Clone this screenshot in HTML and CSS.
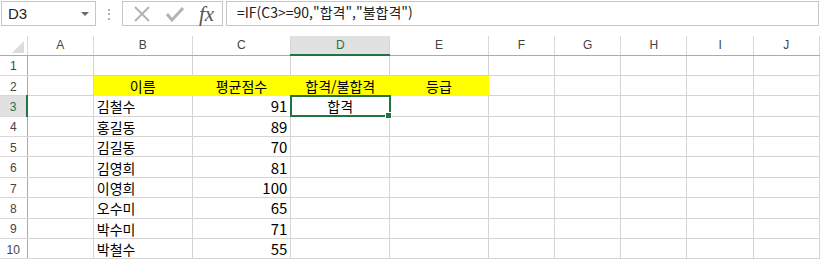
FILE: index.html
```html
<!DOCTYPE html>
<html lang="ko">

<head>
  <meta charset="utf-8">
  <link rel="stylesheet" href="styles.css">
</head>

<body>
  <div class="formulaBar">
    <div class="nameBox">
      <span>D3</span>
      <span class="arrow"></span>
    </div>
    <div class="dots">&#8942;</div>
    <div class="buttons">
      <svg class="btnIcon" width="18" height="18" viewBox="0 0 18 18">
        <path d="M2 2 L16 16 M16 2 L2 16" stroke="#b4b4b4" stroke-width="2" fill="none" />
      </svg>
      <svg class="btnIcon" width="18" height="18" viewBox="0 0 18 18">
        <path d="M1 9 L6 15 L17 3" stroke="#b4b4b4" stroke-width="3" fill="none" />
      </svg>
      <span class="fx">fx</span>
    </div>
    <div class="formulaInput">=IF(C3&gt;=90,"합격","불합격")</div>
  </div>

  <table class="sheet">
    <colgroup>
      <col class="rowHeadCol">
      <col class="narrow">
      <col class="wide">
      <col class="wide">
      <col class="wide">
      <col class="wide">
      <col class="narrow">
      <col class="narrow">
      <col class="narrow">
      <col class="narrow">
      <col class="narrow">
      <col class="rest">
    </colgroup>
    <thead>
      <tr>
        <th class="corner"><span class="triangle"></span></th>
        <th>A</th>
        <th>B</th>
        <th>C</th>
        <th class="activeCol">D</th>
        <th>E</th>
        <th>F</th>
        <th>G</th>
        <th>H</th>
        <th>I</th>
        <th>J</th>
        <th></th>
      </tr>
    </thead>
    <tbody>
      <tr>
        <th>1</th>
        <td></td><td></td><td></td><td></td><td></td><td></td><td></td><td></td><td></td><td></td><td></td>
      </tr>
      <tr>
        <th>2</th>
        <td></td>
        <td class="fill center">이름</td>
        <td class="fill center">평균점수</td>
        <td class="fill center">합격/불합격</td>
        <td class="fill center">등급</td>
        <td></td><td></td><td></td><td></td><td></td><td></td>
      </tr>
      <tr>
        <th class="activeRow">3</th>
        <td></td>
        <td>김철수</td>
        <td class="num">91</td>
        <td class="center selected">합격<span class="handle"></span></td>
        <td></td><td></td><td></td><td></td><td></td><td></td><td></td>
      </tr>
      <tr>
        <th>4</th>
        <td></td><td>홍길동</td><td class="num">89</td>
        <td></td><td></td><td></td><td></td><td></td><td></td><td></td><td></td>
      </tr>
      <tr>
        <th>5</th>
        <td></td><td>김길동</td><td class="num">70</td>
        <td></td><td></td><td></td><td></td><td></td><td></td><td></td><td></td>
      </tr>
      <tr>
        <th>6</th>
        <td></td><td>김영희</td><td class="num">81</td>
        <td></td><td></td><td></td><td></td><td></td><td></td><td></td><td></td>
      </tr>
      <tr>
        <th>7</th>
        <td></td><td>이영희</td><td class="num">100</td>
        <td></td><td></td><td></td><td></td><td></td><td></td><td></td><td></td>
      </tr>
      <tr>
        <th>8</th>
        <td></td><td>오수미</td><td class="num">65</td>
        <td></td><td></td><td></td><td></td><td></td><td></td><td></td><td></td>
      </tr>
      <tr>
        <th>9</th>
        <td></td><td>박수미</td><td class="num">71</td>
        <td></td><td></td><td></td><td></td><td></td><td></td><td></td><td></td>
      </tr>
      <tr>
        <th>10</th>
        <td></td><td>박철수</td><td class="num">55</td>
        <td></td><td></td><td></td><td></td><td></td><td></td><td></td><td></td>
      </tr>
    </tbody>
  </table>
</body>

</html>
```

FILE: styles.css
```css
body {
  margin: 0;
  background-color: white;
  font-family: "Noto Sans CJK KR", "Noto Sans", sans-serif;
  color: black;
  overflow: hidden;
}

/* formula bar */
.formulaBar {
  display: flex;
  height: 25px;
  padding-top: 1px;
  padding-left: 1px;
}

.nameBox {
  height: 23px;
  border: 1px solid #c6c6c6;
  display: flex;
  align-items: center;
  justify-content: space-between;
  padding-left: 6px;
  padding-right: 6px;
  box-sizing: content-box;
  width: 81px;
  font-family: "Liberation Sans", sans-serif;
  font-size: 15px;
  color: #222;
}

.arrow {
  width: 0;
  height: 0;
  border-left: 4px solid transparent;
  border-right: 4px solid transparent;
  border-top: 4px solid #6b6b6b;
}

.dots {
  width: 26px;
  text-align: center;
  color: #9a9a9a;
  font-size: 14px;
  line-height: 25px;
}

.buttons {
  width: 101px;
  height: 25px;
  border: 1px solid #c6c6c6;
  display: flex;
  align-items: center;
  padding-left: 10px;
  gap: 15px;
  box-sizing: border-box;
}

.fx {
  font-family: "Liberation Serif", serif;
  font-style: italic;
  font-size: 21px;
  color: #555;
  line-height: 20px;
}

.formulaInput {
  flex: 1;
  margin-left: 3px;
  margin-right: 1px;
  border: 1px solid #c6c6c6;
  height: 23px;
  line-height: 21px;
  padding-left: 10px;
  font-size: 14px;
  word-spacing: 1px;
  color: #222;
}

/* sheet grid */
.sheet {
  margin-top: 10px;
  border-collapse: collapse;
  table-layout: fixed;
  width: 836px;
  font-size: 14px;
}

.rowHeadCol { width: 27px; }
.narrow { width: 66px; }
.wide { width: 98.5px; }
.rest { width: 16px; }

.sheet th {
  font-family: "Liberation Sans", "Noto Sans", sans-serif;
  font-weight: normal;
  font-size: 12px;
  color: #444;
  padding: 0;
}

.sheet thead th {
  height: 18px;
  border-left: 1px solid #d8d8d8;
  border-bottom: 1px solid #ababab;
  text-align: center;
}

.sheet thead th.corner {
  border-left: none;
  position: relative;
}

.triangle {
  position: absolute;
  right: 3px;
  bottom: 2px;
  width: 0;
  height: 0;
  border-left: 12px solid transparent;
  border-bottom: 12px solid #dcdcdc;
}

.sheet thead th.activeCol {
  background-color: #e1e1e1;
  border-bottom: 2px solid #217346;
  color: #217346;
}

.sheet tbody tr {
  height: 20.4px;
}

.sheet tbody th {
  border-right: 1px solid #ababab;
  border-bottom: 1px solid #d8d8d8;
  text-align: center;
  padding-top: 2px;
}

.sheet tbody th.activeRow {
  background-color: #e1e1e1;
  border-right: 2px solid #217346;
  color: #217346;
}

.sheet td {
  border-right: 1px solid #d4d4d4;
  border-bottom: 1px solid #d4d4d4;
  padding: 1px 3px 0 3px;
  line-height: 18px;
  white-space: nowrap;
  overflow: hidden;
}

.sheet td.fill {
  background-color: #ffff00;
  border-color: #ffff00;
}

.center {
  text-align: center;
}

.num {
  text-align: right;
  font-size: 15px;
}

.sheet td.selected {
  position: relative;
  overflow: visible;
  outline: 2px solid #217346;
  outline-offset: -1px;
}

.handle {
  position: absolute;
  right: -3px;
  bottom: -3px;
  width: 5px;
  height: 5px;
  background-color: #217346;
  border: 1px solid white;
}
```
